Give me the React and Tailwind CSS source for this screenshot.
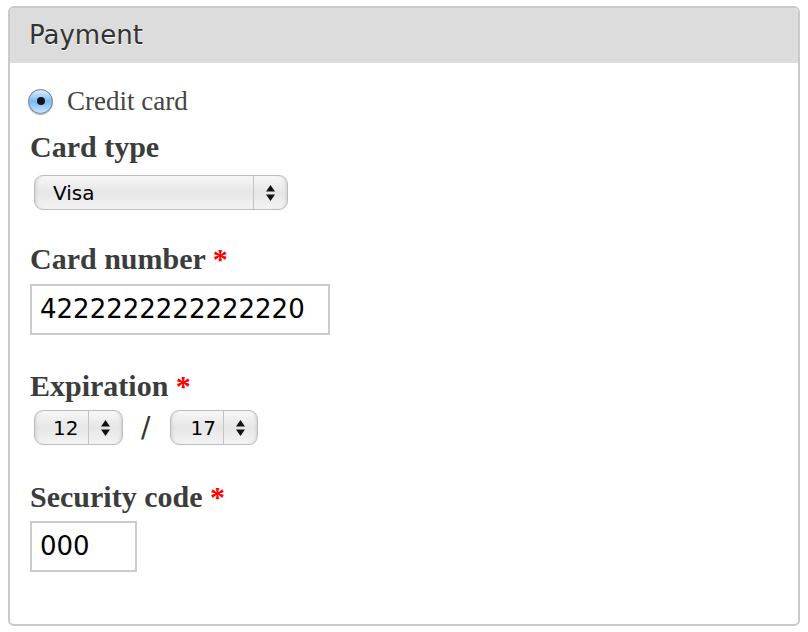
import React from 'react';

const serif = "font-['Liberation_Serif',serif]";
const sans = "font-['DejaVu_Sans',sans-serif]";

function Arrows() {
  return (
    <svg width="11" height="18" viewBox="0 0 11 18" className="block">
      <path d="M5.5 1 L10 7.5 L1 7.5 Z" fill="#111" />
      <path d="M1 10.5 L10 10.5 L5.5 17 Z" fill="#111" />
    </svg>
  );
}

function FakeSelect({ value, width, textPad = 'pl-[18px]' }) {
  return (
    <div
      className={`flex h-[35px] items-stretch rounded-[9px] border border-[#bdbdbd] bg-linear-to-b from-[#f7f7f7] via-[#e6e6e6] to-[#f3f3f3] shadow-[inset_3px_0_3px_-2px_#cfcfcf,inset_-3px_0_3px_-2px_#cfcfcf] ${width}`}
    >
      <div className={`flex flex-1 items-center ${textPad} ${sans} text-[20px] text-black`}>{value}</div>
      <div className="flex w-[34px] items-center justify-center border-l border-[#c4c4c4]">
        <Arrows />
      </div>
    </div>
  );
}

function Label({ children, required, className = '' }) {
  return (
    <div className={`${serif} text-[30px] font-bold leading-[30px] text-[#3c3c3c] ${className}`}>
      {children}
      {required && <span className="text-[#ff0000]"> *</span>}
    </div>
  );
}

export default function App() {
  return (
    <div className="min-h-screen bg-white px-[8px] pt-[6px]">
      <div className="h-[620px] w-[792px] overflow-hidden rounded-[6px] border-2 border-[#cacaca] bg-white">
        <div className="flex h-[55px] items-center bg-[#dcdcdc] pl-[19px]">
          <span className={`${sans} text-[26px] text-[#333] [text-shadow:0_1px_0_#fff]`}>Payment</span>
        </div>

        <div className="px-[20px]">
          <div className="mt-[23px] flex h-[30px] items-center">
            <div className="-ml-[2px] flex h-[25px] w-[25px] items-center justify-center rounded-full border border-[#6b7c94] bg-linear-to-b from-[#dcedfd] via-[#7ab9f1] to-[#cbe6ff] shadow-[0_1px_1px_rgba(0,0,0,0.3)]">
              <div className="h-[8px] w-[8px] rounded-full bg-[#0f1420]" />
            </div>
            <span className={`${serif} ml-[14px] text-[27px] leading-[30px] text-[#444]`}>Credit card</span>
          </div>

          <Label className="mt-[16px]">Card type</Label>
          <div className="mt-[13px] ml-[4px]">
            <FakeSelect value="Visa" width="w-[254px]" />
          </div>

          <Label required className="mt-[34px]">Card number</Label>
          <div
            className={`mt-[10px] flex h-[51px] w-[300px] items-center border-2 border-[#cccccc] bg-white pl-[8px] ${sans} text-[26px] text-black`}
          >
            4222222222222220
          </div>

          <Label required className="mt-[36px]">Expiration</Label>
          <div className="mt-[9px] ml-[4px] flex h-[35px] items-center">
            <FakeSelect value="12" width="w-[89px]" />
            <span className={`${sans} ml-[18px] mr-[20px] text-[28px] leading-[35px] text-[#333]`}>/</span>
            <FakeSelect value="17" width="w-[88px]" textPad="pl-[19px]" />
          </div>

          <Label required className="mt-[37px]">Security code</Label>
          <div
            className={`mt-[9px] flex h-[51px] w-[107px] items-center border-2 border-[#cccccc] bg-white pl-[8px] ${sans} text-[26px] text-black`}
          >
            000
          </div>
        </div>
      </div>
    </div>
  );
}
